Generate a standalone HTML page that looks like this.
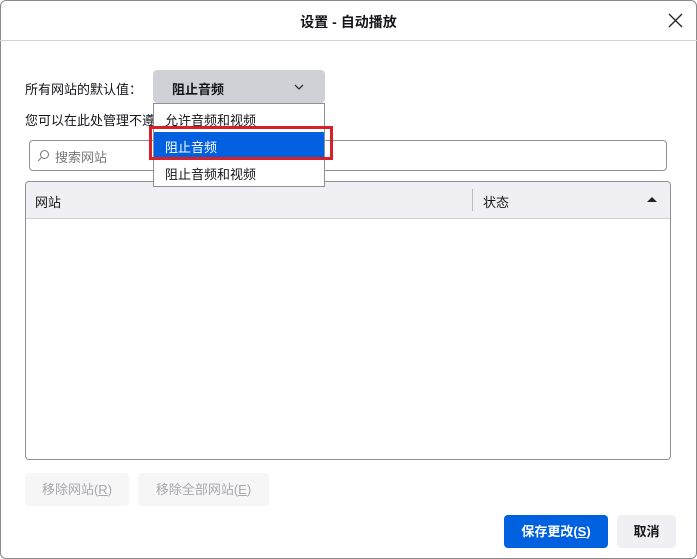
<!DOCTYPE html>
<html><head><meta charset="utf-8"><style>
*{box-sizing:border-box;margin:0;padding:0}
body{width:697px;height:559px;background:#fff;font-family:"Liberation Sans","Noto Sans CJK SC",sans-serif;font-size:13px;color:#15141a;position:relative;overflow:hidden}
.frame{position:absolute;inset:0;border:1px solid #8a8a8a;border-radius:6px}
.a{position:absolute;white-space:nowrap}
</style></head><body>
<div class="frame"></div>
<div class="a" style="left:0;top:0;width:697px;height:41px;border-bottom:1px solid #d4d4d4"></div>
<div class="a" style="left:0;width:697px;top:12px;text-align:center;font-weight:bold;font-size:14px">设置 - 自动播放</div>
<svg class="a" style="left:668px;top:13px" width="15" height="15" viewBox="0 0 15 15"><path d="M1 1L14 14M14 1L1 14" stroke="#222" stroke-width="1.3"/></svg>
<div class="a" style="left:25px;top:79px">所有网站的默认值：</div>
<div class="a" style="left:153px;top:70px;width:172px;height:33px;background:#d0d0d7;border-radius:4px"></div>
<div class="a" style="left:172px;top:79px;font-weight:bold">阻止音频</div>
<svg class="a" style="left:294px;top:84px" width="10" height="6" viewBox="0 0 10 6"><path d="M1 1L5 5L9 1" stroke="#333" fill="none" stroke-width="1.3"/></svg>
<div class="a" style="left:25px;top:110px">您可以在此处管理不遵</div>
<div class="a" style="left:29px;top:140px;width:638px;height:31px;border:1px solid #8f8f9d;border-radius:4px"></div>
<svg class="a" style="left:37px;top:149px" width="13" height="13" viewBox="0 0 13 13"><circle cx="7.5" cy="5.5" r="4" stroke="#777" fill="none"/><path d="M4.5 8.5L1 12" stroke="#777"/></svg>
<div class="a" style="left:55px;top:147px;color:#777">搜索网站</div>
<div class="a" style="left:25px;top:181px;width:646px;height:279px;border:1px solid #8f8f9d;border-radius:4px;overflow:hidden">
<div style="height:37px;background:#f0f0f4;border-bottom:1px solid #cfcfd8"></div></div>
<div class="a" style="left:472px;top:189px;width:1px;height:22px;background:#bbb"></div>
<div class="a" style="left:35px;top:192px">网站</div>
<div class="a" style="left:483px;top:192px">状态</div>
<svg class="a" style="left:647px;top:196px" width="10" height="6"><path d="M0 6L5 1L10 6Z" fill="#222"/></svg>
<div class="a" style="left:153px;top:103px;width:172px;height:84px;background:#fff;border:1px solid #8f8f9d"></div>
<div class="a" style="left:165px;top:110px">允许音频和视频</div>
<div class="a" style="left:154px;top:132px;width:170px;height:27px;background:#0060df"></div>
<div class="a" style="left:165px;top:137px;color:#fff">阻止音频</div>
<div class="a" style="left:165px;top:164px">阻止音频和视频</div>
<div class="a" style="left:149px;top:126px;width:184px;height:34px;border:3px solid #d7202a"></div>
<div class="a" style="left:25px;top:473px;width:104px;height:33px;background:#f6f6f7;border-radius:4px;color:#a8a8ad;text-align:center;line-height:33px">移除网站(<u>R</u>)</div>
<div class="a" style="left:138px;top:473px;width:131px;height:33px;background:#f6f6f7;border-radius:4px;color:#a8a8ad;text-align:center;line-height:33px">移除全部网站(<u>E</u>)</div>
<div class="a" style="left:504px;top:515px;width:104px;height:33px;background:#0061e0;border-radius:4px;color:#fff;font-weight:bold;text-align:center;line-height:33px">保存更改(<u>S</u>)</div>
<div class="a" style="left:617px;top:515px;width:59px;height:33px;background:#f0f0f4;border-radius:4px;font-weight:bold;text-align:center;line-height:33px">取消</div>
</body></html>
